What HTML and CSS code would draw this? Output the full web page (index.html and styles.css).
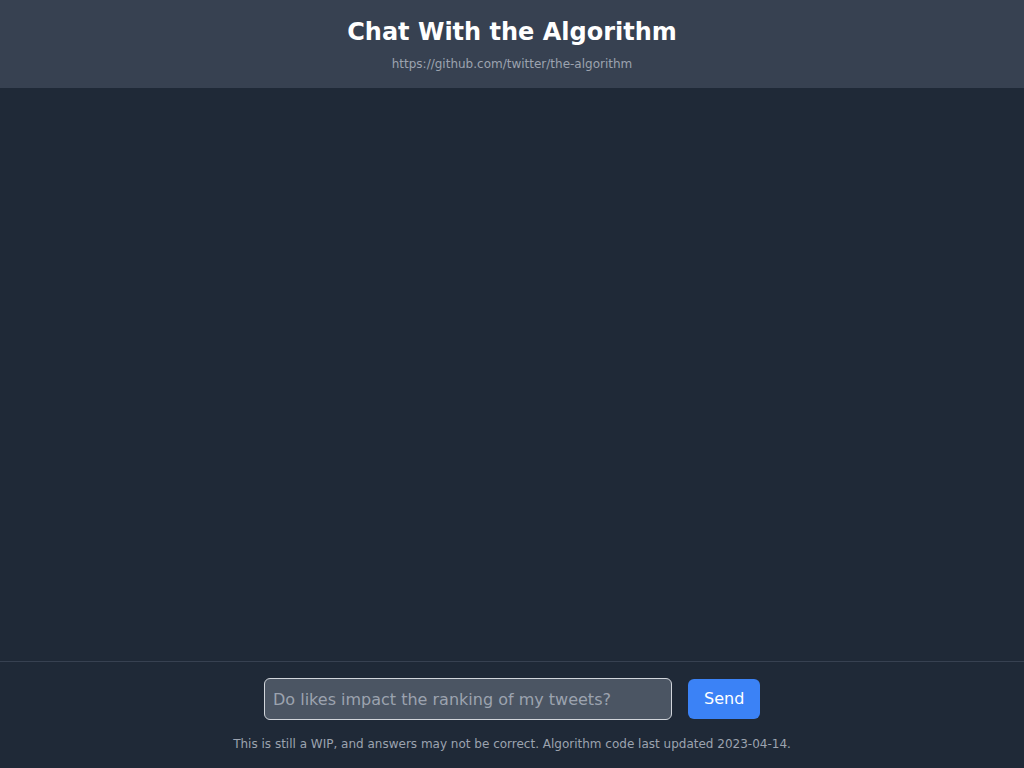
FILE: index.html
```html
<!DOCTYPE html>
<html lang="en">
<head>
<meta charset="utf-8">
<title>Chat With the Algorithm</title>
<link rel="stylesheet" href="styles.css">
</head>
<body>
<div class="app">
  <header class="header">
    <h1 class="title">Chat With the Algorithm</h1>
    <a class="link" href="#">https://github.com/twitter/the-algorithm</a>
  </header>
  <main class="messages"></main>
  <footer class="footer">
    <form class="composer">
      <input class="prompt" type="text" placeholder="Do likes impact the ranking of my tweets?">
      <button class="send" type="button">Send</button>
    </form>
    <p class="note">This is still a WIP, and answers may not be correct. Algorithm code last updated 2023-04-14.</p>
  </footer>
</div>
</body>
</html>
```

FILE: styles.css
```css
* { box-sizing: border-box; }
html, body { margin: 0; height: 100%; }
body {
  font-family: "DejaVu Sans", sans-serif;
  background: #1f2937;
  color: #fff;
}
.app {
  display: flex;
  flex-direction: column;
  height: 100vh;
}
.header {
  background: #374151;
  padding: 16px 0;
  display: flex;
  flex-direction: column;
  align-items: center;
}
.title {
  margin: 0;
  font-size: 24px;
  line-height: 32px;
  font-weight: bold;
  color: #fff;
}
.link {
  margin-top: 8px;
  font-size: 12px;
  line-height: 16px;
  color: #9ca3af;
  text-decoration: none;
}
.messages {
  flex: 1;
}
.footer {
  border-top: 1px solid #374151;
  padding: 16px 0;
  display: flex;
  flex-direction: column;
  align-items: center;
}
.composer {
  display: flex;
  align-items: center;
  gap: 16px;
  margin: 0;
}
.prompt {
  width: 408px;
  height: 42px;
  padding: 8px;
  font-family: "DejaVu Sans", sans-serif;
  font-size: 16px;
  line-height: 24px;
  color: #fff;
  background: #4b5563;
  border: 1px solid #d1d5db;
  border-radius: 6px;
  outline: none;
}
.prompt::placeholder { color: #9ca3af; }
.send {
  width: 72px;
  height: 40px;
  font-family: "DejaVu Sans", sans-serif;
  font-size: 16px;
  line-height: 24px;
  color: #fff;
  background: #3b82f6;
  border: none;
  border-radius: 6px;
  padding: 8px 16px;
}
.note {
  margin: 16px 0 0;
  font-size: 12px;
  line-height: 16px;
  color: #9ca3af;
}
```
